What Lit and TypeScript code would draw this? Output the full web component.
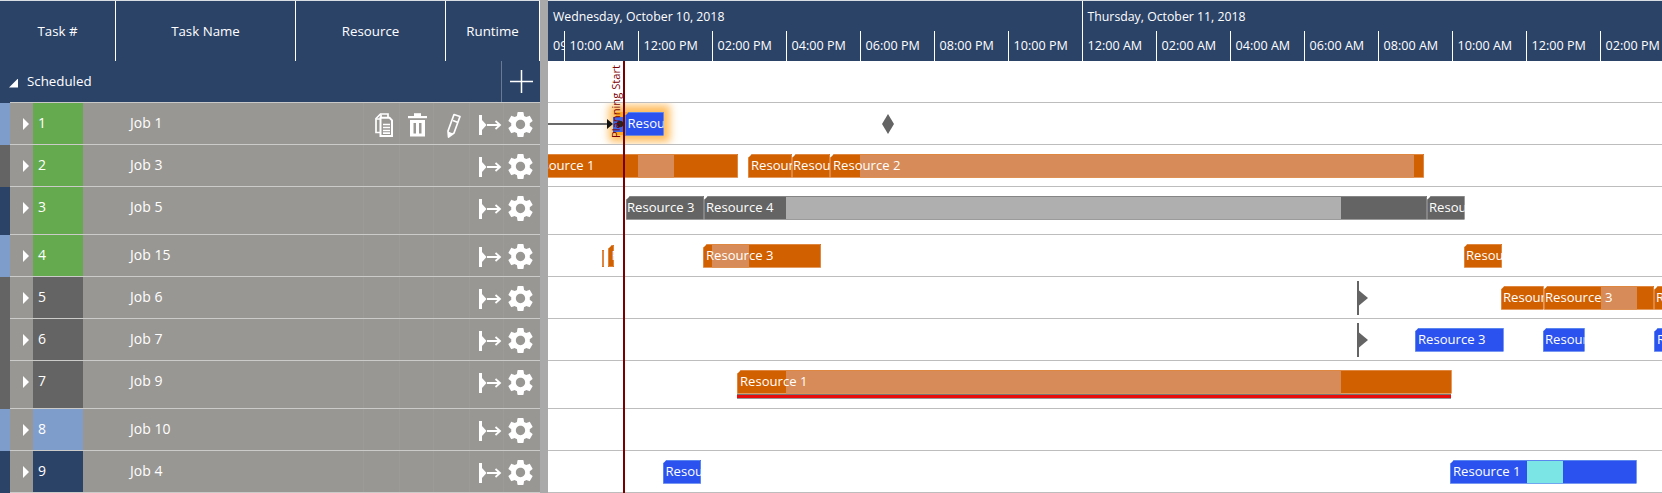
import { LitElement, html, css, svg } from "lit";
import { customElement } from "lit/decorators.js";

type Seg = [number, "d" | "l" | "c"];
interface Bar { x: number; y: number; h?: number; end: number; kind: "o" | "b" | "g"; text?: string; tx?: number; segs?: Seg[]; noCut?: boolean; }

const CHART_X = 548;
const ROW_H = [42, 42, 48, 42, 42, 42, 48, 42, 42];
const ROW_TOPS = [103, 145, 187, 235, 277, 319, 361, 409, 451];

const ROWS = [
  { n: "1", job: "Job 1", strip: "lb", cell: "gr", tools: true },
  { n: "2", job: "Job 3", strip: "dk", cell: "gr" },
  { n: "3", job: "Job 5", strip: "nv", cell: "gr" },
  { n: "4", job: "Job 15", strip: "lb", cell: "gr" },
  { n: "5", job: "Job 6", strip: "dk", cell: "dk" },
  { n: "6", job: "Job 7", strip: "dk", cell: "dk" },
  { n: "7", job: "Job 9", strip: "dk", cell: "dk" },
  { n: "8", job: "Job 10", strip: "lb", cell: "lb" },
  { n: "9", job: "Job 4", strip: "nv", cell: "nv" },
];

const BARS: Bar[][] = [
  [
    { x: 625, y: 112, end: 663.5, kind: "b", text: "Resource 1", tx: 627.5 },
  ],
  [
    { x: 520, y: 154, end: 738, kind: "o", text: "Resource 1", tx: 527, segs: [[638, "d"], [674, "l"], [738, "d"]] },
    { x: 748, y: 154, end: 792, kind: "o", text: "Resource 2", tx: 751 },
    { x: 792, y: 154, end: 830, kind: "o", text: "Resource 2", tx: 793 },
    { x: 830, y: 154, end: 1424, kind: "o", text: "Resource 2", tx: 833, segs: [[860, "d"], [1414, "l"], [1424, "d"]] },
  ],
  [
    { x: 626, y: 196, end: 704, kind: "g", text: "Resource 3", tx: 627 },
    { x: 704, y: 196, end: 1427, kind: "g", text: "Resource 4", tx: 706, segs: [[786, "d"], [1340.5, "l"], [1427, "d"]] },
    { x: 1427, y: 196, end: 1464.5, kind: "g", text: "Resource 3", tx: 1429 },
  ],
  [
    { x: 602, y: 250, h: 17, end: 604, kind: "o", noCut: true },
    { x: 608, y: 245, h: 22, end: 614, kind: "o", text: "Resource 3", tx: 611.5 },
    { x: 703, y: 244, end: 821, kind: "o", text: "Resource 3", tx: 706, segs: [[712, "d"], [749, "l"], [821, "d"]] },
    { x: 1463.5, y: 244, end: 1502, kind: "o", text: "Resource 3", tx: 1466 },
  ],
  [
    { x: 1500.5, y: 286, end: 1543.5, kind: "o", text: "Resource 3", tx: 1503 },
    { x: 1543.5, y: 286, end: 1654, kind: "o", text: "Resource 3", tx: 1545, segs: [[1600.5, "d"], [1636.5, "l"], [1654, "d"]] },
    { x: 1654, y: 286, end: 1674, kind: "o", text: "Resource 3", tx: 1656 },
  ],
  [
    { x: 1414.5, y: 328, end: 1503.5, kind: "b", text: "Resource 3", tx: 1418 },
    { x: 1542.5, y: 328, end: 1584.5, kind: "b", text: "Resource 3", tx: 1545 },
    { x: 1654, y: 328, end: 1674, kind: "b", text: "Resource 3", tx: 1657 },
  ],
  [
    { x: 737, y: 370, end: 1451.5, kind: "o", text: "Resource 1", tx: 740, segs: [[786, "d"], [1340.5, "l"], [1451.5, "d"]] },
  ],
  [],
  [
    { x: 662.5, y: 460, end: 701, kind: "b", text: "Resource 3", tx: 665.5 },
    { x: 1450, y: 460, end: 1636.5, kind: "b", text: "Resource 1", tx: 1453, segs: [[1526.5, "d"], [1562.5, "c"], [1636.5, "d"]] },
  ],
];

const TICKS = ["10:00 AM", "12:00 PM", "02:00 PM", "04:00 PM", "06:00 PM", "08:00 PM", "10:00 PM", "12:00 AM", "02:00 AM", "04:00 AM", "06:00 AM", "08:00 AM", "10:00 AM", "12:00 PM", "02:00 PM"];

const GEAR = "M19.14 12.94c.04-.3.06-.61.06-.94 0-.32-.02-.64-.07-.94l2.03-1.58c.18-.14.23-.41.12-.61l-1.92-3.32c-.12-.22-.37-.29-.59-.22l-2.39.96c-.5-.38-1.03-.7-1.62-.94l-.36-2.54c-.04-.24-.24-.41-.48-.41h-3.84c-.24 0-.43.17-.47.41l-.36 2.54c-.59.24-1.13.57-1.62.94l-2.39-.96c-.22-.08-.47 0-.59.22L2.74 8.87c-.12.21-.08.47.12.61l2.03 1.58c-.05.3-.09.63-.09.94s.02.64.07.94l-2.03 1.58c-.18.14-.23.41-.12.61l1.92 3.32c.12.22.37.29.59.22l2.39-.96c.5.38 1.03.7 1.62.94l.36 2.54c.05.24.24.41.48.41h3.84c.24 0 .44-.17.47-.41l.36-2.54c.59-.24 1.13-.56 1.62-.94l2.39.96c.22.08.47 0 .59-.22l1.92-3.32c.12-.22.07-.47-.12-.61l-2.01-1.58zM12 15.6c-1.98 0-3.6-1.62-3.6-3.6s1.62-3.6 3.6-3.6 3.6 1.62 3.6 3.6-1.62 3.6-3.6 3.6z";

const ICON_COPY = svg`<g fill="none" stroke="#fff" stroke-width="1.7">
  <path d="M5.5 19.5H1V5.5L5.5 1H13V4"/><path d="M6 1.5V6H1.5"/>
  <path d="M5.5 4.8H14.5L17 7.3V23H5.5Z" fill="#999794" stroke-width="2"/>
  <path d="M8 11.5H15M8 14.5H15M8 17.5H15M8 20.2H15" stroke-width="1.7"/></g>`;
const ICON_TRASH = svg`<g fill="#fff"><path d="M8 3H27V5.2H8Z"/><path d="M14 .2H21V3H14Z"/>
  <path fill-rule="evenodd" d="M10 7H25V23.5H10ZM13.5 10V20.5H16V10ZM19 10V20.5H21.5V10Z"/></g>`;
const ICON_PEN = svg`<g fill="none" stroke="#fff" stroke-width="1.7" stroke-linejoin="round">
  <path d="M20 1.5L26 3.5L20 20L14.5 24L14 18Z"/><path d="M19 7.5L24 9.5"/></g>
  <path d="M14.2 18.5L19 20.5L14.5 24Z" fill="#fff"/>`;
const ICON_LINK = svg`<g fill="#fff"><path d="M9 2H12V22H9Z"/><path d="M12 7L16.5 12L12 17Z"/><path d="M17 11H29V13H17Z"/></g>
  <path d="M25.5 8L30 12L25.5 16" fill="none" stroke="#fff" stroke-width="1.8"/>`;

@customElement("app-root")
export class AppRoot extends LitElement {
  static styles = css`
    :host {
      display: flex;
      width: 1662px;
      height: 493px;
      overflow: hidden;
      background: #fff;
      font-family: "Open Sans", "Noto Sans", sans-serif;
      font-size: 13.3px;
      color: #fff;
    }
    .left { width: 540px; flex: none; display: flex; flex-direction: column; }
    .split { width: 8px; flex: none; background: #a9a9a9; }
    .chart { flex: 1; min-width: 0; display: flex; flex-direction: column; position: relative; overflow: hidden; }

    .lhead {
      height: 61px; flex: none; display: flex; background: #2c4368;
      border-top: 1px solid #d9dde4; box-sizing: border-box;
    }
    .lhead > div { display: flex; align-items: center; justify-content: center; border-right: 1px solid #fff; box-sizing: border-box; padding-bottom: 1px; }
    .lhead > div:nth-child(1) { width: 116px; }
    .lhead > div:nth-child(2) { width: 180px; }
    .lhead > div:nth-child(3) { width: 150px; }
    .lhead > div:nth-child(4) { width: 94px; }

    .group { height: 42px; flex: none; box-sizing: border-box; display: flex; align-items: center; background: #2c4368; position: relative; }
    .group .line { position: absolute; left: 10px; right: 0; bottom: 0; height: 1px; background: #c9c9c9; }
    .tri { width: 9px; height: 9px; margin-left: 9px; clip-path: polygon(100% 0, 100% 100%, 0 100%); background: #fff; margin-top: 2px; }
    .gname { margin-left: 9px; flex: 1; margin-top: -2px; }
    .plus { width: 39px; height: 41px; border-left: 1px solid #6a7a94; box-sizing: border-box; display: flex; align-items: center; margin-top: -1px; }
    .plus svg { display: block; margin-left: 8px; }

    .row { flex: none; display: flex; }
    .strip { width: 10px; flex: none; }
    .rbody { flex: 1; display: flex; align-items: stretch; background: #999794; border-bottom: 1px solid #cbcbc9; min-width: 0; box-sizing: border-box; }
    .exp { width: 23px; flex: none; display: flex; align-items: flex-start; }
    .exp i { display: block; width: 6px; height: 12px; margin: 15px 0 0 13px; background: #fff; clip-path: polygon(0 0, 100% 50%, 0 100%); }
    .num, .job { font-size: 14px; line-height: 39px; }
    .num { width: 50px; flex: none; box-sizing: border-box; padding-left: 5px; }
    .job { width: 280px; flex: none; box-sizing: border-box; padding-left: 47px; }
    .acts { flex: 1; display: flex; }
    .act { flex: none; display: flex; align-items: flex-start; border-left: 1px solid #9d9b98; box-sizing: border-box; }
    .act svg { display: block; margin-top: 10px; }
    .act svg.gear { margin-top: 6px; margin-left: 0.5px; }
    .act svg.copy { margin-left: 11px; }
    .a1 { width: 36px; } .a2 { width: 34px; } .a3 { width: 36px; } .a4 { width: 34px; } .a5 { width: 37px; }

    .lb { background: #7f9dcb; }
    .dk { background: #646464; }
    .nv { background: #2c4368; }
    .gr { background: #65aa4f; }

    .thead { height: 61px; flex: none; background: #2c4368; display: flex; flex-direction: column; border-top: 1px solid #d9dde4; box-sizing: border-box; font-size: 12.6px; }
    .days { height: 30px; flex: none; display: flex; font-size: 12.3px; }
    .day { flex: none; box-sizing: border-box; padding-left: 5px; display: flex; align-items: center; }
    .day.first { width: 533.5px; }
    .day.next { flex: 1; border-left: 1px solid #fff; }
    .ticks { height: 30px; flex: none; display: flex; }
    .tick { flex: none; width: 74px; box-sizing: border-box; border-left: 1px solid #fff; padding-left: 5px; display: flex; align-items: center; white-space: nowrap; overflow: hidden; padding-bottom: 1px; }
    .tick.stub { width: 15.5px; border-left: 0; }

    .grow { flex: none; position: relative; box-sizing: border-box; border-bottom: 1px solid #bdbdbd; }
    .grow.g0 { height: 42px; }
    .grow.clip { overflow: hidden; }

    .bar { position: absolute; overflow: hidden; display: flex; box-sizing: border-box; clip-path: polygon(4px 0, 100% 0, 100% 100%, 0 100%, 0 4px); white-space: nowrap; font-size: 13.1px; }
    .bar.nocut { clip-path: none; }
    .o { background: #d16000; }
    .b { background: #2b52ee; }
    .g { background: #646464; }
    .bar::after { content: ""; position: absolute; inset: 0; border: 1px solid; border-radius: 1px; }
    .o::after { border-color: #df8740; }
    .b::after { border-color: #5a86f0; }
    .g::after { border-color: #858585; }
    .seg { flex: none; height: 100%; }
    .seg.l.og { background: #d68b58; }
    .seg.l.gy { background: #afafaf; }
    .seg.c { background: #7be5e5; }
    .lab { position: absolute; top: 0; bottom: 2px; display: flex; align-items: center; z-index: 1; }

    .glow { position: absolute; left: 68px; top: 9px; width: 47px; height: 23px; background: #ffa826; box-shadow: 0 0 8px 7px #ffbe60; }
    .stub2 { position: absolute; left: 64.5px; top: 14px; width: 11px; height: 15px; background: #3f66e8; }
    .dep { position: absolute; left: 0; top: 20px; width: 60px; height: 2px; background: #6b6b6b; }
    .depsvg { position: absolute; left: 58px; top: 13px; display: block; z-index: 3; }
    .diamond { position: absolute; left: 334px; top: 11px; width: 12px; height: 20px; background: #646464; clip-path: polygon(50% 0, 100% 50%, 50% 100%, 0 50%); }
    .ms { position: absolute; left: 809px; top: 4px; }
    .ms svg { display: block; }

    .redline { position: absolute; left: 75px; top: 61px; bottom: 0; width: 2px; background: #7a0000; z-index: 4; }
    .plan { position: absolute; left: 59px; top: 65px; height: 73px; writing-mode: vertical-rl; transform: rotate(180deg); color: #7a0000; z-index: 4; white-space: nowrap; line-height: 17px; font-size: 11.2px; }

    .redbar { position: absolute; left: 189px; top: 33px; width: 713.5px; height: 5px; background: #e80c0c; border-top: 1px solid #777; border-bottom: 1px solid #999; box-sizing: border-box; }
  `;

  private bar(b: Bar, rowTop: number) {
    const w = b.end - b.x;
    const h = b.h ?? 23.5;
    const style = `left:${b.x - CHART_X}px;top:${b.y - rowTop}px;width:${w}px;height:${h}px`;
    let prev = b.x;
    const tone = b.kind === "g" ? "gy" : "og";
    return html`<div class="bar ${b.kind} ${b.noCut ? "nocut" : ""}" style=${style}>
      ${(b.segs ?? []).map(([end, t]) => {
        const sw = end - prev;
        prev = end;
        return html`<span class="seg ${t} ${tone}" style="width:${sw}px"></span>`;
      })}
      ${b.text ? html`<span class="lab" style="left:${(b.tx ?? b.x) - b.x}px">${b.text}</span>` : ""}
    </div>`;
  }

  render() {
    return html`
      <div class="left">
        <div class="lhead"><div>Task #</div><div>Task Name</div><div>Resource</div><div>Runtime</div></div>
        <div class="group">
          <span class="tri"></span><span class="gname">Scheduled</span>
          <span class="plus"><svg width="23" height="23" viewBox="0 0 23 23"><path d="M0 11.5H23M11.5 0V23" stroke="#fff" stroke-width="1.5" fill="none"/></svg></span>
          <span class="line"></span>
        </div>
        ${ROWS.map((r, i) => html`
          <div class="row" style="height:${ROW_H[i]}px">
            <div class="strip ${r.strip}"></div>
            <div class="rbody">
              <div class="exp"><i></i></div>
              <div class="num ${r.cell}">${r.n}</div>
              <div class="job">${r.job}</div>
              <div class="acts">
                <div class="act a1">${r.tools ? html`<svg class="copy" width="18" height="24" viewBox="0 0 18 24">${ICON_COPY}</svg>` : ""}</div>
                <div class="act a2">${r.tools ? html`<svg width="33" height="24" viewBox="0 0 33 24">${ICON_TRASH}</svg>` : ""}</div>
                <div class="act a3">${r.tools ? html`<svg width="35" height="26" viewBox="0 0 35 26">${ICON_PEN}</svg>` : ""}</div>
                <div class="act a4"><svg width="33" height="24" viewBox="0 0 33 24">${ICON_LINK}</svg></div>
                <div class="act a5"><svg class="gear" width="31" height="31" viewBox="0 0 24 24"><path fill="#fff" d=${GEAR}/></svg></div>
              </div>
            </div>
          </div>`)}
      </div>
      <div class="split"></div>
      <div class="chart">
        <div class="thead">
          <div class="days">
            <div class="day first">Wednesday, October 10, 2018</div>
            <div class="day next">Thursday, October 11, 2018</div>
          </div>
          <div class="ticks">
            <div class="tick stub">09</div>
            ${TICKS.map((t) => html`<div class="tick">${t}</div>`)}
          </div>
        </div>
        <div class="grow g0"></div>
        ${ROWS.map((_, i) => html`
          <div class="grow ${i === 0 ? "clip" : ""}" style="height:${ROW_H[i]}px">
            ${i === 0 ? html`
              <div class="glow"></div>
              <div class="stub2"></div>
              <div class="dep"></div>
              <svg class="depsvg" width="20" height="16" viewBox="0 0 20 16"><path d="M1 3L7 8L1 13Z" fill="#111"/><circle cx="14" cy="8" r="3.2" fill="#222"/></svg>
              <div class="diamond"></div>` : ""}
            ${i === 4 || i === 5 ? html`
              <div class="ms"><svg width="12" height="34" viewBox="0 0 12 34"><path d="M0 0H2V34H0Z" fill="#646464"/><path d="M2 9.5L11 17L2 24.5Z" fill="#646464"/></svg></div>` : ""}
            ${BARS[i].map((b) => this.bar(b, ROW_TOPS[i]))}
            ${i === 6 ? html`<div class="redbar"></div>` : ""}
          </div>`)}
        <div class="redline"></div>
        <div class="plan">Planning Start</div>
      </div>
    `;
  }
}
